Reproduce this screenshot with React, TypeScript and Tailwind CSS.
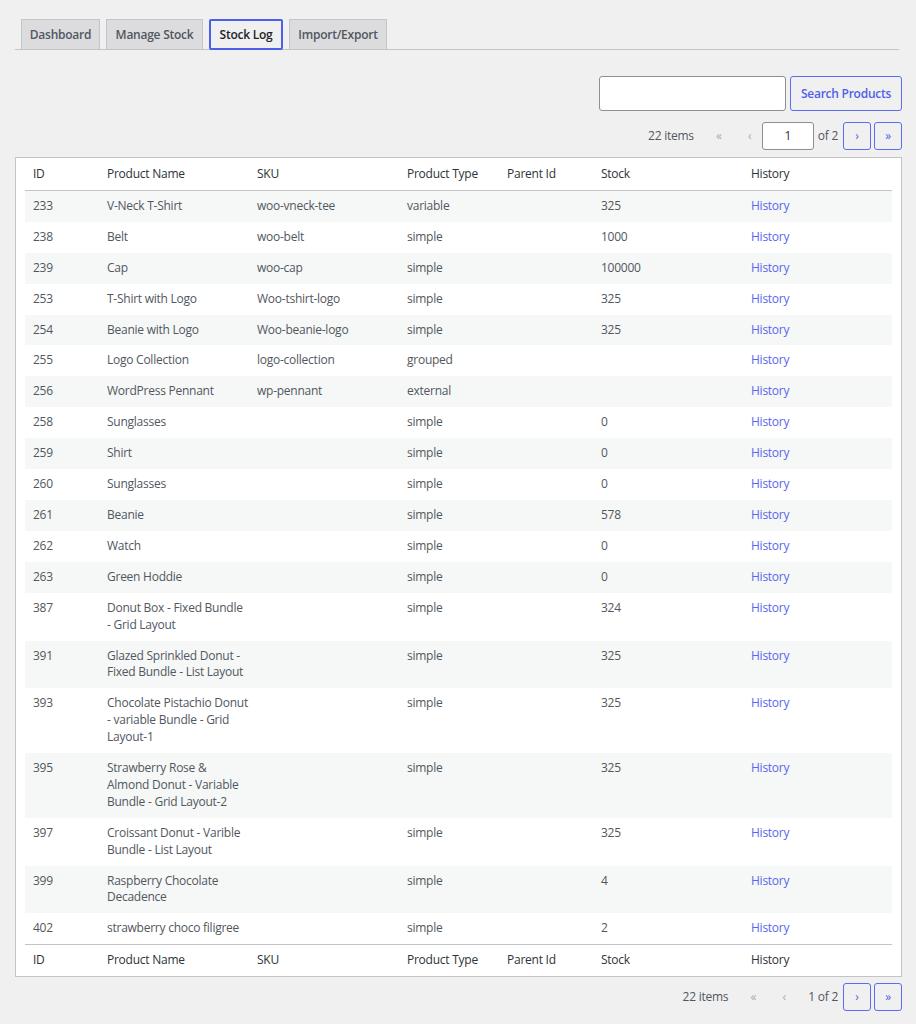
import React from "react";

type Row = { id: number; name: string[]; sku: string; type: string; stock: string };

const rows: Row[] = [
  { id: 233, name: ["V-Neck T-Shirt"], sku: "woo-vneck-tee", type: "variable", stock: "325" },
  { id: 238, name: ["Belt"], sku: "woo-belt", type: "simple", stock: "1000" },
  { id: 239, name: ["Cap"], sku: "woo-cap", type: "simple", stock: "100000" },
  { id: 253, name: ["T-Shirt with Logo"], sku: "Woo-tshirt-logo", type: "simple", stock: "325" },
  { id: 254, name: ["Beanie with Logo"], sku: "Woo-beanie-logo", type: "simple", stock: "325" },
  { id: 255, name: ["Logo Collection"], sku: "logo-collection", type: "grouped", stock: "" },
  { id: 256, name: ["WordPress Pennant"], sku: "wp-pennant", type: "external", stock: "" },
  { id: 258, name: ["Sunglasses"], sku: "", type: "simple", stock: "0" },
  { id: 259, name: ["Shirt"], sku: "", type: "simple", stock: "0" },
  { id: 260, name: ["Sunglasses"], sku: "", type: "simple", stock: "0" },
  { id: 261, name: ["Beanie"], sku: "", type: "simple", stock: "578" },
  { id: 262, name: ["Watch"], sku: "", type: "simple", stock: "0" },
  { id: 263, name: ["Green Hoddie"], sku: "", type: "simple", stock: "0" },
  { id: 387, name: ["Donut Box - Fixed Bundle", "- Grid Layout"], sku: "", type: "simple", stock: "324" },
  { id: 391, name: ["Glazed Sprinkled Donut -", "Fixed Bundle - List Layout"], sku: "", type: "simple", stock: "325" },
  { id: 393, name: ["Chocolate Pistachio Donut", "- variable Bundle - Grid", "Layout-1"], sku: "", type: "simple", stock: "325" },
  { id: 395, name: ["Strawberry Rose &", "Almond Donut - Variable", "Bundle - Grid Layout-2"], sku: "", type: "simple", stock: "325" },
  { id: 397, name: ["Croissant Donut - Varible", "Bundle - List Layout"], sku: "", type: "simple", stock: "325" },
  { id: 399, name: ["Raspberry Chocolate", "Decadence"], sku: "", type: "simple", stock: "4" },
  { id: 402, name: ["strawberry choco filigree"], sku: "", type: "simple", stock: "2" },
];

const tabs = [
  { label: "Dashboard", w: "w-[79px]" },
  { label: "Manage Stock", w: "w-[97px]" },
  { label: "Stock Log", w: "w-[74px]" },
  { label: "Import/Export", w: "w-[98px]" },
];
const headers = ["ID", "Product Name", "SKU", "Product Type", "Parent Id", "Stock", "History"];

function HeaderRow({ top }: { top: number }) {
  return (
    <tr>
      {headers.map((h) => (
        <th
          key={h}
          className={`px-2 pb-[7px] text-left font-normal text-[#2c3338] ${top === 8 ? "pt-[8px]" : "pt-[7px]"}`}
        >
          {h}
        </th>
      ))}
    </tr>
  );
}

function Pager({ withInput }: { withInput: boolean }) {
  return (
    <div className="flex items-center justify-end text-[12px] text-[#50575e]">
      <span className="mr-[20px]">22 items</span>
      <span className="w-[10px] text-center text-[#a7aaad] mr-[21px]">«</span>
      <span className="w-[10px] text-center text-[#a7aaad] mr-[7px]">‹</span>
      {withInput ? (
        <>
          <div className="w-[52px] h-[28px] bg-white border border-[#8c8f94] rounded-[3px] flex items-center justify-center text-[#2c3338]">
            1
          </div>
          <span className="ml-[4px] mr-[5px]">of 2</span>
        </>
      ) : (
        <span className="ml-[12px] mr-[5px]">1 of 2</span>
      )}
      <div className="w-[28px] h-[28px] border border-[#5b6cf0] rounded-[3px] flex items-center justify-center text-[#4f5fe8] mr-[3px]">
        ›
      </div>
      <div className="w-[28px] h-[28px] border border-[#5b6cf0] rounded-[3px] flex items-center justify-center text-[#4f5fe8]">
        »
      </div>
    </div>
  );
}

export default function App() {
  return (
    <div
      className="min-h-[1024px] bg-[#f0f0f1] pl-[15px] pr-[14px] pt-[19px] text-[12px] tracking-[-0.25px] text-[#50575e]"
      style={{ fontFamily: '"Open Sans", "Noto Sans", sans-serif' }}
    >
      {/* Tabs */}
      <div className="flex items-end gap-[6px] border-b border-[#c3c4c7] pl-[6px] mr-[3px]">
        {tabs.map((t) =>
          t.label === "Stock Log" ? (
            <div
              key={t.label}
              className={`${t.w} h-[31px] flex items-center justify-center bg-[#f0f0f1] border-2 border-[#4c5fe8] rounded-[2px] font-semibold text-[#1d2327] -mb-px`}
            >
              {t.label}
            </div>
          ) : (
            <div
              key={t.label}
              className={`${t.w} h-[30px] flex items-center justify-center bg-[#dcdcde] border border-b-0 border-[#c3c4c7] font-semibold text-[#50575e]`}
            >
              {t.label}
            </div>
          )
        )}
      </div>

      {/* Search */}
      <div className="flex justify-end gap-[4px] mt-[26px]">
        <div className="w-[187px] h-[35px] bg-white border border-[#8c8f94] rounded-[3px]" />
        <div className="w-[112px] h-[35px] border border-[#5b6cf0] rounded-[3px] flex items-center justify-center text-[#4f5fe8] font-semibold">
          Search Products
        </div>
      </div>

      <div className="mt-[11px]">
        <Pager withInput />
      </div>

      {/* Table */}
      <div className="mt-[7px] bg-white border border-[#c3c4c7] px-[9px] leading-[16.9px]">
        <table className="w-full table-fixed border-collapse">
          <colgroup>
            <col className="w-[74px]" />
            <col className="w-[150px]" />
            <col className="w-[150px]" />
            <col className="w-[100px]" />
            <col className="w-[94px]" />
            <col className="w-[150px]" />
            <col />
          </colgroup>
          <thead className="border-b border-[#c3c4c7]">
            <HeaderRow top={8} />
          </thead>
          <tbody>
            {rows.map((r, i) => (
              <tr key={r.id} className={i % 2 === 0 ? "bg-[#f6f7f7]" : "bg-white"}>
                <td className="px-2 py-[7px] align-top">{r.id}</td>
                <td className="px-2 py-[7px] align-top">
                  {r.name.map((line) => (
                    <div key={line} className="whitespace-nowrap">
                      {line}
                    </div>
                  ))}
                </td>
                <td className="px-2 py-[7px] align-top">{r.sku}</td>
                <td className="px-2 py-[7px] align-top">{r.type}</td>
                <td className="px-2 py-[7px] align-top"></td>
                <td className="px-2 py-[7px] align-top">{r.stock}</td>
                <td className="px-2 py-[7px] align-top text-[#5867f0]">History</td>
              </tr>
            ))}
          </tbody>
          <tfoot className="border-t border-[#c3c4c7]">
            <HeaderRow top={7} />
          </tfoot>
        </table>
      </div>

      <div className="mt-[6px] pb-4">
        <Pager withInput={false} />
      </div>
    </div>
  );
}
